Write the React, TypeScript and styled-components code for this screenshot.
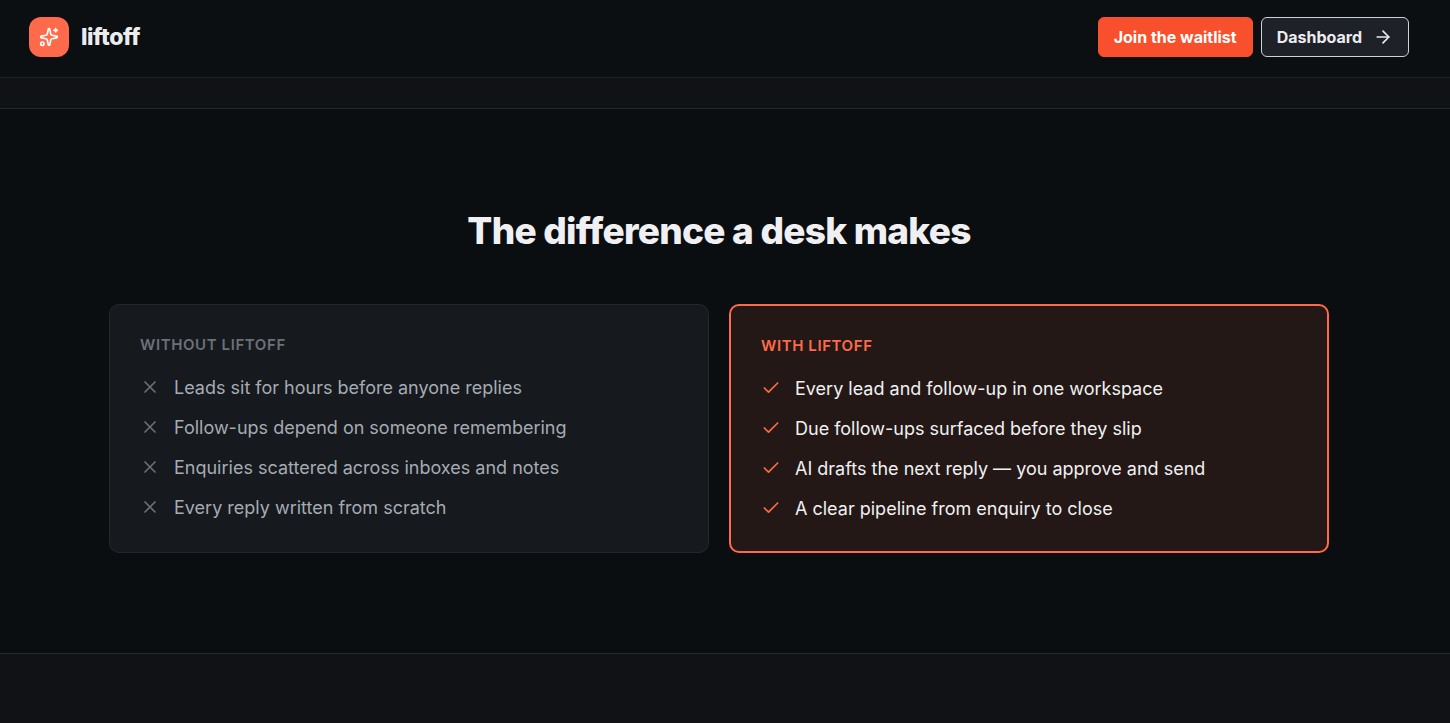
import React from "react";
import styled, { createGlobalStyle } from "styled-components";
import { ArrowRight, Check, X } from "lucide-react";

const GlobalStyle = createGlobalStyle`
  *, *::before, *::after { box-sizing: border-box; }
  body {
    margin: 0;
    background: #111216;
    color: #f0f0f3;
    font-family: Inter, "Liberation Sans", sans-serif;
  }
  h1, h2, h3, ul { margin: 0; padding: 0; }
`;

const Header = styled.header`
  display: flex;
  align-items: center;
  justify-content: space-between;
  padding: 17px 41px 20px 29px;
  background: #0b0f12;
  border-bottom: 1px solid #1d2024;
`;

const Brand = styled.a`
  display: flex;
  align-items: center;
  gap: 12px;
  color: #ececef;
  font-size: 23px;
  font-weight: 800;
  line-height: 28px;
  letter-spacing: -0.02em;
  text-decoration: none;
`;

const BrandMark = styled.span`
  display: grid;
  place-items: center;
  width: 40px;
  height: 40px;
  border-radius: 12px;
  background: #ff6b4a;
  color: #ffffff;
`;

const Actions = styled.nav`
  display: flex;
  gap: 8px;
`;

const Button = styled.button<{ $primary?: boolean }>`
  display: flex;
  align-items: center;
  gap: 11px;
  height: 40px;
  padding: 0 15px;
  border: 1px solid ${(p) => (p.$primary ? "#f8502c" : "#cbd2dc")};
  border-radius: 6px;
  background: ${(p) => (p.$primary ? "#f8502c" : "#1f2128")};
  color: ${(p) => (p.$primary ? "#ffffff" : "#ececef")};
  font-family: inherit;
  font-size: 16px;
  font-weight: 700;
  line-height: 24px;
  cursor: pointer;
`;

const Band = styled.div`
  height: 30px;
  background: #111216;
`;

const Section = styled.section`
  padding: 100px 121px 100px 109px;
  background: #0a0e11;
  border-top: 1px solid #23282b;
  border-bottom: 1px solid #23282b;
`;

const Title = styled.h2`
  margin-bottom: 51px;
  font-size: 37px;
  font-weight: 800;
  line-height: 44px;
  letter-spacing: -0.02em;
  text-align: center;
`;

const Cards = styled.div`
  display: grid;
  grid-template-columns: 1fr 1fr;
  gap: 20px;
  max-width: 1220px;
  margin: 0 auto;
`;

const Card = styled.article<{ $accent?: boolean }>`
  padding: 30px;
  border: ${(p) => (p.$accent ? "2px solid #ff6b4a" : "1px solid #24282c")};
  border-radius: 10px;
  background: ${(p) => (p.$accent ? "#231815" : "#16191d")};
  color: ${(p) => (p.$accent ? "#f0f0f3" : "#a5abb3")};
`;

const CardLabel = styled.h3<{ $accent?: boolean }>`
  margin-bottom: 20px;
  color: ${(p) => (p.$accent ? "#ff6b4a" : "#6b7079")};
  font-size: 15px;
  font-weight: 600;
  line-height: 20px;
  letter-spacing: 0.04em;
  text-transform: uppercase;
`;

const Points = styled.ul`
  display: grid;
  gap: 15px;
  list-style: none;
`;

const Point = styled.li<{ $accent?: boolean }>`
  display: flex;
  align-items: flex-start;
  gap: 14px;
  font-size: 18px;
  line-height: 25px;

  svg {
    flex: none;
    margin-top: 2px;
    color: ${(p) => (p.$accent ? "#ff6b4a" : "#6b7079")};
  }
`;

const without = [
  "Leads sit for hours before anyone replies",
  "Follow-ups depend on someone remembering",
  "Enquiries scattered across inboxes and notes",
  "Every reply written from scratch",
];

const withDesk = [
  "Every lead and follow-up in one workspace",
  "Due follow-ups surfaced before they slip",
  "AI drafts the next reply — you approve and send",
  "A clear pipeline from enquiry to close",
];

function SparkleIcon() {
  return (
    <svg width="20" height="20" viewBox="0 0 24 24" fill="none" stroke="currentColor" strokeWidth="2" strokeLinecap="round" strokeLinejoin="round" aria-hidden="true">
      <path d="M11.017 2.814a1 1 0 0 1 1.966 0l1.051 5.558a2 2 0 0 0 1.594 1.594l5.558 1.051a1 1 0 0 1 0 1.966l-5.558 1.051a2 2 0 0 0-1.594 1.594l-1.051 5.558a1 1 0 0 1-1.966 0l-1.051-5.558a2 2 0 0 0-1.594-1.594l-5.558-1.051a1 1 0 0 1 0-1.966l5.558-1.051a2 2 0 0 0 1.594-1.594z" />
      <path d="M20 2v4" />
      <path d="M22 4h-4" />
      <circle cx="4" cy="20" r="2" />
    </svg>
  );
}

export default function App() {
  return (
    <>
      <GlobalStyle />
      <Header>
        <Brand href="#">
          <BrandMark>
            <SparkleIcon />
          </BrandMark>
          liftoff
        </Brand>
        <Actions>
          <Button $primary type="button">Join the waitlist</Button>
          <Button type="button">
            Dashboard
            <ArrowRight size={20} strokeWidth={2} />
          </Button>
        </Actions>
      </Header>
      <main>
        <Band />
        <Section>
          <Title>The difference a desk makes</Title>
          <Cards>
            <Card>
              <CardLabel>Without liftoff</CardLabel>
              <Points>
                {without.map((text) => (
                  <Point key={text}>
                    <X size={20} strokeWidth={2} />
                    {text}
                  </Point>
                ))}
              </Points>
            </Card>
            <Card $accent>
              <CardLabel $accent>With liftoff</CardLabel>
              <Points>
                {withDesk.map((text) => (
                  <Point key={text} $accent>
                    <Check size={20} strokeWidth={2} />
                    {text}
                  </Point>
                ))}
              </Points>
            </Card>
          </Cards>
        </Section>
      </main>
    </>
  );
}
